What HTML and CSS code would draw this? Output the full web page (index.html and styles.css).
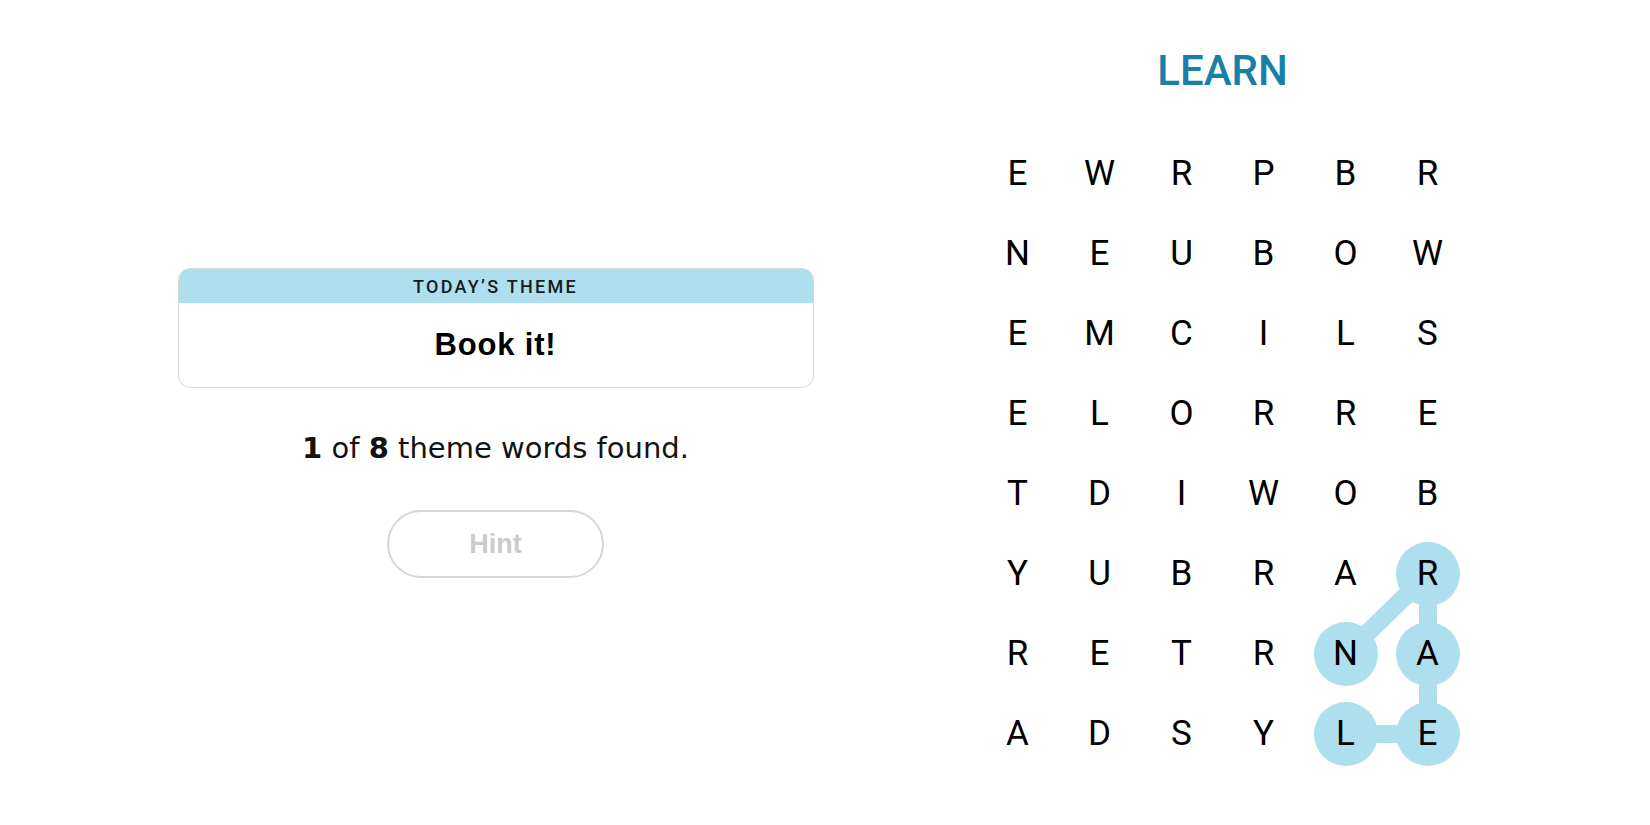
FILE: index.html
```html
<!DOCTYPE html>
<html lang="en">
<head>
<meta charset="utf-8">
<title>Strands</title>
<link rel="stylesheet" href="styles.css">
</head>
<body>
<main class="game">
  <section class="info">
    <div class="theme-card">
      <div class="theme-head">TODAY’S THEME</div>
      <div class="theme-body">Book it!</div>
    </div>
    <p class="progress"><b>1</b> of <b>8</b> theme words found.</p>
    <button class="hint" disabled>Hint</button>
  </section>
  <section class="board">
    <h1 class="word">LEARN</h1>
    <div class="grid">
      <svg class="trail" width="492" height="640" viewBox="0 0 492 640">
        <g stroke="#aedfee" stroke-width="18" stroke-linecap="round">
          <line x1="369" y1="600" x2="451" y2="600"/>
          <line x1="451" y1="600" x2="451" y2="520"/>
          <line x1="451" y1="520" x2="451" y2="440"/>
          <line x1="451" y1="440" x2="369" y2="520"/>
        </g>
        <g fill="#aedfee">
          <circle cx="451" cy="440" r="32"/>
          <circle cx="369" cy="520" r="32"/>
          <circle cx="451" cy="520" r="32"/>
          <circle cx="369" cy="600" r="32"/>
          <circle cx="451" cy="600" r="32"/>
        </g>
      </svg>
      <span>E</span><span>W</span><span>R</span><span>P</span><span>B</span><span>R</span>
      <span>N</span><span>E</span><span>U</span><span>B</span><span>O</span><span>W</span>
      <span>E</span><span>M</span><span>C</span><span>I</span><span>L</span><span>S</span>
      <span>E</span><span>L</span><span>O</span><span>R</span><span>R</span><span>E</span>
      <span>T</span><span>D</span><span>I</span><span>W</span><span>O</span><span>B</span>
      <span>Y</span><span>U</span><span>B</span><span>R</span><span>A</span><span>R</span>
      <span>R</span><span>E</span><span>T</span><span>R</span><span>N</span><span>A</span>
      <span>A</span><span>D</span><span>S</span><span>Y</span><span>L</span><span>E</span>
    </div>
  </section>
</main>
</body>
</html>
```
FILE: styles.css
```css
html, body {
  margin: 0;
  padding: 0;
  background: #ffffff;
  color: #121212;
}

.game {
  width: 1650px;
  height: 825px;
  display: flex;
  justify-content: center;
  align-items: flex-start;
  gap: 163px;
  box-sizing: border-box;
  padding-right: 4px;
}

.info {
  width: 636px;
  margin-top: 268px;
  display: flex;
  flex-direction: column;
  align-items: center;
}

.theme-card {
  width: 100%;
  box-sizing: border-box;
  border: 1.5px solid #d8d8d8;
  border-radius: 12px;
  overflow: hidden;
}

.theme-head {
  height: 34px;
  background: #aedfee;
  display: flex;
  align-items: center;
  justify-content: center;
  font-family: Roboto, "Liberation Sans", sans-serif;
  font-weight: 500;
  font-size: 18px;
  letter-spacing: 2.3px;
  color: #1a1a1a;
}

.theme-body {
  height: 84px;
  display: flex;
  align-items: center;
  justify-content: center;
  font-family: "Liberation Sans", Arial, sans-serif;
  font-weight: 700;
  font-size: 31px;
  letter-spacing: 0.8px;
  color: #000;
}

.progress {
  margin: 42px 0 0;
  font-family: "DejaVu Sans", "Liberation Sans", sans-serif;
  font-size: 29px;
  line-height: 36px;
  color: #121212;
}

.progress b {
  font-weight: 700;
}

.hint {
  margin-top: 44px;
  width: 217px;
  height: 68px;
  border: 2px solid #d6d6d6;
  border-radius: 34px;
  background: #fff;
  font-family: "Liberation Sans", Arial, sans-serif;
  font-weight: 700;
  font-size: 27px;
  color: #cbcbcb;
  padding: 0;
}

.board {
  width: 492px;
  display: flex;
  flex-direction: column;
  align-items: center;
}

.word {
  margin: 46px 0 0;
  font-family: Roboto, "Liberation Sans", sans-serif;
  font-weight: 500;
  font-size: 42px;
  line-height: 50px;
  color: #1a7fa8;
  letter-spacing: 0;
}

.grid {
  position: relative;
  margin-top: 38px;
  width: 492px;
  display: grid;
  grid-template-columns: repeat(6, 82px);
  grid-auto-rows: 80px;
}

.trail {
  position: absolute;
  left: 0;
  top: 0;
}

.grid span {
  position: relative;
  display: flex;
  align-items: center;
  justify-content: center;
  font-family: Roboto, "Liberation Sans", sans-serif;
  font-size: 35px;
  font-weight: 400;
  color: #000;
  line-height: 80px;
}
```
